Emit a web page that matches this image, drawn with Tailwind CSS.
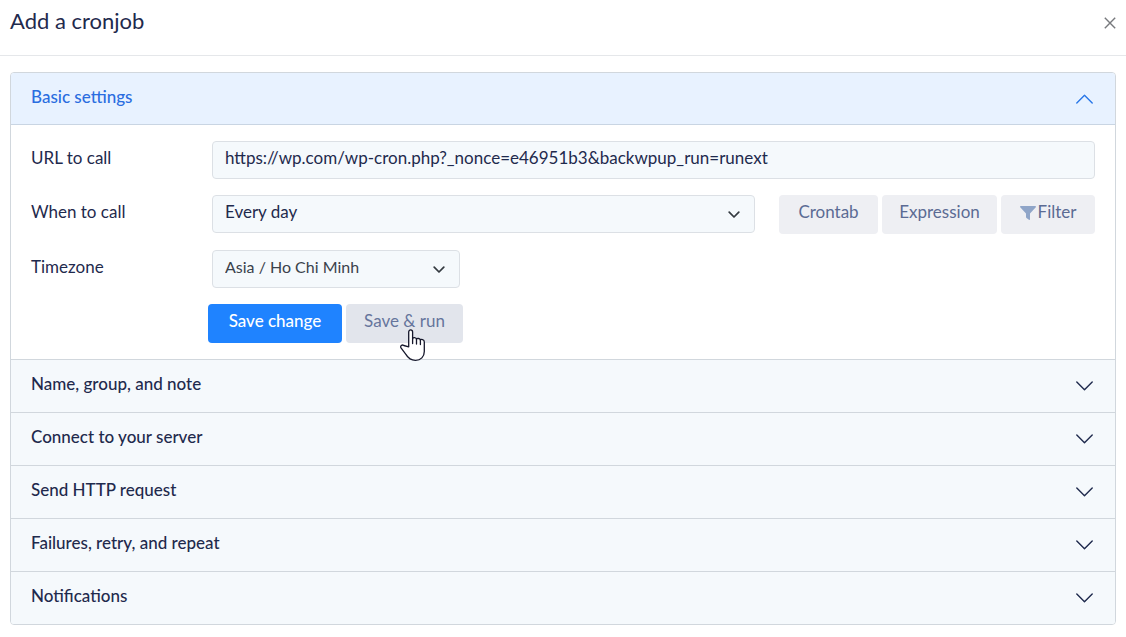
<!DOCTYPE html>
<html lang="en">
<head>
<meta charset="utf-8">
<meta name="viewport" content="width=device-width, initial-scale=1">
<title>Add a cronjob</title>
<script src="https://cdn.jsdelivr.net/npm/@tailwindcss/browser@4"></script>
</head>
<body class="bg-white font-['Lato',sans-serif] text-[17px] leading-6 text-[#1f2a4d]">
<header class="flex h-14 items-center justify-between border-b border-[#e5e7ea] pr-2 pb-3 pl-[10px]">
  <h1 class="pb-[2px] text-[22px] leading-7">Add a cronjob</h1>
  <button type="button" aria-label="Close" class="mt-[3px] p-[2px]">
    <svg class="size-3" viewBox="0 0 12 12" fill="none" stroke="#77797d" stroke-width="1.4"><path d="M.8.8l10.4 10.4M11.2.8L.8 11.2"/></svg>
  </button>
</header>
<main class="px-[10px] pt-4 pb-3">
  <div class="divide-y divide-[#d1d7dd] overflow-hidden rounded border border-[#d1d7dd]">
    <section>
      <h2><button type="button" aria-expanded="true" class="flex h-[51px] w-full items-center justify-between bg-[#e8f2ff] px-5 font-medium text-[#2a6de0]">
        <span class="pb-1">Basic settings</span>
        <svg class="mr-[2px] h-[10px] w-[17px]" viewBox="0 0 17 10" fill="none" stroke="#2a78e8" stroke-width="1.4" stroke-linecap="round" stroke-linejoin="round"><path d="M.8 9l7.7-7.7L16.200 9"/></svg>
      </button></h2>
      <form class="flex flex-col gap-4 border-t border-[#c9d5e3] px-5 py-4">
        <div class="flex h-[38px] items-center">
          <label for="url" class="w-[181px] shrink-0 pb-1">URL to call</label>
          <input id="url" type="text" value="https://wp.com/wp-cron.php?_nonce=e46951b3&amp;backwpup_run=runext" class="h-[38px] min-w-0 flex-1 rounded border border-[#dce0e5] bg-[#f5f9fc] px-3 pb-[5px]">
        </div>
        <div class="flex h-[39px] items-start">
          <label for="when" class="w-[181px] shrink-0 pt-[5px]">When to call</label>
          <div class="relative min-w-0 flex-1">
            <select id="when" class="h-[38px] w-full appearance-none rounded border border-[#dce0e5] bg-[#f5f9fc] pr-9 pb-1 pl-3"><option>Every day</option></select>
            <svg class="pointer-events-none absolute top-4 right-[15px] h-2 w-3" viewBox="0 0 12 8" fill="none" stroke="#343a40" stroke-width="1.7" stroke-linecap="round" stroke-linejoin="round"><path d="M1.200 1.200L6 6l4.800-4.800"/></svg>
          </div>
          <div class="ml-6 flex gap-1 text-[#5b6b94]">
            <button type="button" class="h-[39px] w-[99px] rounded bg-[#eeeff3] pb-[5px]">Crontab</button>
            <button type="button" class="h-[39px] w-[115px] rounded bg-[#eeeff3] pb-[5px]">Expression</button>
            <button type="button" class="flex h-[39px] w-[94px] items-center justify-center gap-[2px] rounded bg-[#eeeff3] pb-[5px]">
              <svg class="mt-[2px] h-[14px] w-4" viewBox="0 0 16 14" fill="#8fa5c8"><path d="M.8 0h14.400c.7 0 1 .8.600 1.300L10 7.600v5.700c0 .6-.6.900-1.100.500L6.500 12c-.3-.2-.5-.5-.5-.9V7.600L.2 1.300C-.2.800.1 0 .8 0z"/></svg>
              Filter
            </button>
          </div>
        </div>
        <div class="flex h-[38px] items-center">
          <label for="tz" class="w-[181px] shrink-0 pb-1">Timezone</label>
          <div class="relative">
            <select id="tz" class="block h-[38px] w-[248px] appearance-none rounded border border-[#dce0e5] bg-[#f5f9fc] pr-9 pb-1 pl-3 text-[16px] text-[#3a414b]"><option>Asia / Ho Chi Minh</option></select>
            <svg class="pointer-events-none absolute top-4 right-[15px] h-2 w-3" viewBox="0 0 12 8" fill="none" stroke="#343a40" stroke-width="1.7" stroke-linecap="round" stroke-linejoin="round"><path d="M1.200 1.200L6 6l4.800-4.800"/></svg>
          </div>
        </div>
        <div class="flex gap-1 pl-[177px]">
          <button type="submit" class="h-[39px] w-[134px] rounded bg-[#1f83ff] pb-[5px] font-medium text-white">Save change</button>
          <button type="button" class="relative h-[39px] w-[117px] rounded bg-[#e2e5ec] pb-[5px] text-[#66759c]">Save &amp; run
            <svg class="pointer-events-none absolute top-[25px] left-[54px] h-8 w-[26px]" viewBox="0 0 26 32" fill="#fff" stroke="#15172b" stroke-width="1.3" stroke-linejoin="round" stroke-linecap="round"><path d="M8.700 17.800V3c0-2.900 3.900-2.900 3.900 0v6.800c.2-1.700 3.600-1.600 3.900.500.400-1.300 3.700-1.100 3.900.800.500-1.100 3.900-.7 3.900 1.800v9.600c0 5.200-3.500 8.800-8.800 8.800-4.300 0-7.500-2.300-9.600-5.900L1 18.900c-1.100-2 1.100-3.600 2.800-2.400z"/><path d="M12.600 9.800v4.700M16.500 10.300v4.700M20.400 11.100v4.400" fill="none"/></svg>
          </button>
        </div>
      </form>
    </section>
    <h2><button type="button" aria-expanded="false" class="flex h-[52px] w-full items-center justify-between bg-[#f5f9fc] px-5 font-medium">
      <span class="pb-[5px]">Name, group, and note</span>
      <svg class="mr-[2px] h-[10px] w-[17px]" viewBox="0 0 17 10" fill="none" stroke="#1f2a4d" stroke-width="1.4" stroke-linecap="round" stroke-linejoin="round"><path d="M.8 1l7.700 7.700L16.200 1"/></svg>
    </button></h2>
    <h2><button type="button" aria-expanded="false" class="flex h-[52px] w-full items-center justify-between bg-[#f5f9fc] px-5 font-medium">
      <span class="pb-[5px]">Connect to your server</span>
      <svg class="mr-[2px] h-[10px] w-[17px]" viewBox="0 0 17 10" fill="none" stroke="#1f2a4d" stroke-width="1.4" stroke-linecap="round" stroke-linejoin="round"><path d="M.8 1l7.700 7.700L16.200 1"/></svg>
    </button></h2>
    <h2><button type="button" aria-expanded="false" class="flex h-[52px] w-full items-center justify-between bg-[#f5f9fc] px-5 font-medium">
      <span class="pb-[5px]">Send HTTP request</span>
      <svg class="mr-[2px] h-[10px] w-[17px]" viewBox="0 0 17 10" fill="none" stroke="#1f2a4d" stroke-width="1.4" stroke-linecap="round" stroke-linejoin="round"><path d="M.8 1l7.700 7.700L16.200 1"/></svg>
    </button></h2>
    <h2><button type="button" aria-expanded="false" class="flex h-[52px] w-full items-center justify-between bg-[#f5f9fc] px-5 font-medium">
      <span class="pb-[5px]">Failures, retry, and repeat</span>
      <svg class="mr-[2px] h-[10px] w-[17px]" viewBox="0 0 17 10" fill="none" stroke="#1f2a4d" stroke-width="1.4" stroke-linecap="round" stroke-linejoin="round"><path d="M.8 1l7.700 7.700L16.200 1"/></svg>
    </button></h2>
    <h2><button type="button" aria-expanded="false" class="flex h-[52px] w-full items-center justify-between bg-[#f5f9fc] px-5 font-medium">
      <span class="pb-[5px]">Notifications</span>
      <svg class="mr-[2px] h-[10px] w-[17px]" viewBox="0 0 17 10" fill="none" stroke="#1f2a4d" stroke-width="1.4" stroke-linecap="round" stroke-linejoin="round"><path d="M.8 1l7.700 7.700L16.200 1"/></svg>
    </button></h2>
  </div>
</main>
</body>
</html>
